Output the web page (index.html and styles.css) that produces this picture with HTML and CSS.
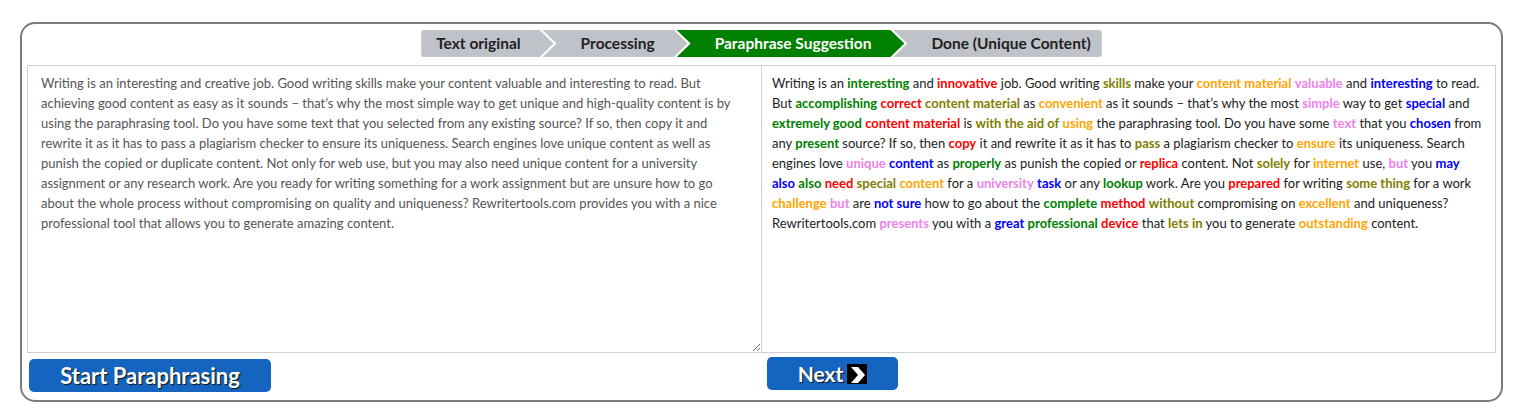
FILE: index.html
```html
<!DOCTYPE html>
<html lang="en">
<head>
    <meta charset="UTF-8">
    <meta name="viewport" content="width=device-width, initial-scale=1.0">
    <title>Paraphrasing Tool</title>

    <link rel="stylesheet" href="styles.css">
</head>
<body>

    <div class="tool-box">

        <div class="steps">
            <div class="step first">Text original</div>
            <div class="step">Processing</div>
            <div class="step active">Paraphrase Suggestion</div>
            <div class="step last">Done (Unique Content)</div>
        </div>

        <div class="panels">
            <div class="col">
                <textarea class="input-text" id="inputText">Writing is an interesting and creative job. Good writing skills make your content valuable and interesting to read. But achieving good content as easy as it sounds – that’s why the most simple way to get unique and high-quality content is by using the paraphrasing tool. Do you have some text that you selected from any existing source? If so, then copy it and rewrite it as it has to pass a plagiarism checker to ensure its uniqueness. Search engines love unique content as well as punish the copied or duplicate content. Not only for web use, but you may also need unique content for a university assignment or any research work. Are you ready for writing something for a work assignment but are unsure how to go about the whole process without compromising on quality and uniqueness? Rewritertools.com provides you with a nice professional tool that allows you to generate amazing content.</textarea>
                <div>
                    <button type="button" class="btn btn-start">Start Paraphrasing</button>
                </div>
            </div>

            <div class="col">
                <div class="output-text">
                    Writing is an <b class="c1">interesting</b> and <b class="c2">innovative</b> job. Good writing <b class="c3">skills</b> make your <b class="c4">content material</b> <b class="c5">valuable</b> and <b class="c6">interesting</b> to read.
                    But <b class="c1">accomplishing</b> <b class="c2">correct</b> <b class="c3">content material</b> as <b class="c4">convenient</b> as it sounds – that’s why the most <b class="c5">simple</b> way to get <b class="c6">special</b> and
                    <b class="c1">extremely good</b> <b class="c2">content material</b> is <b class="c3">with the aid of</b> <b class="c4">using</b> the paraphrasing tool. Do you have some <b class="c5">text</b> that you <b class="c6">chosen</b> from
                    any <b class="c1">present</b> source? If so, then <b class="c2">copy</b> it and rewrite it as it has to <b class="c3">pass</b> a plagiarism checker to <b class="c4">ensure</b> its uniqueness. Search
                    engines love <b class="c5">unique</b> <b class="c6">content</b> as <b class="c1">properly</b> as punish the copied or <b class="c2">replica</b> content. Not <b class="c3">solely</b> for <b class="c4">internet</b> use, <b class="c5">but</b> you <b class="c6">may</b>
                    <b class="c6">also</b> <b class="c1">also</b> <b class="c2">need</b> <b class="c3">special</b> <b class="c4">content</b> for a <b class="c5">university</b> <b class="c6">task</b> or any <b class="c1">lookup</b> work. Are you <b class="c2">prepared</b> for writing <b class="c3">some thing</b> for a work
                    <b class="c4">challenge</b> <b class="c5">but</b> are <b class="c6">not sure</b> how to go about the <b class="c1">complete</b> <b class="c2">method</b> <b class="c3">without</b> compromising on <b class="c4">excellent</b> and uniqueness?
                    Rewritertools.com <b class="c5">presents</b> you with a <b class="c6">great</b> <b class="c1">professional</b> <b class="c2">device</b> that <b class="c3">lets in</b> you to generate <b class="c4">outstanding</b> content.
                </div>
                <div>
                    <button type="button" class="btn btn-next">Next <span class="next-icon"><svg width="20" height="20" viewBox="0 0 20 20"><path d="M4 2 L11 2 L18 10 L11 18 L4 18 L11 10 Z" fill="#fff"/></svg></span></button>
                </div>
            </div>
        </div>

    </div>

</body>
</html>
```

FILE: styles.css
```css
body{
    margin: 0;
    background: white;
    font-family: Lato, "Liberation Sans", sans-serif;
}
.tool-box
{
    width: 1483px;
    height: 380px;
    box-sizing: border-box;
    margin: 22px 0 0 20px;
    border: 2px solid #7b7b7b;
    border-radius: 15px;
    padding: 6px 5px 0 5px;
}
.steps
{
    display: flex;
    justify-content: center;
    height: 27px;
    margin-bottom: 8px;
}
.step
{
    background: #bfc3c9;
    color: #222;
    font-weight: bold;
    font-size: 15.5px;
    line-height: 27px;
    padding: 0 33px 0 38px;
    margin-left: -11px;
    clip-path: polygon(0 0, calc(100% - 14px) 0, 100% 50%, calc(100% - 14px) 100%, 0 100%, 14px 50%);
}
.step.first
{
    margin-left: 0;
    padding-left: 15px;
    border-radius: 3px 0 0 3px;
    clip-path: polygon(0 0, calc(100% - 14px) 0, 100% 50%, calc(100% - 14px) 100%, 0 100%);
}
.step.active
{
    background: #008000;
    color: white;
}
.step.last
{
    padding-right: 11px;
    border-radius: 0 3px 3px 0;
    clip-path: polygon(0 0, 100% 0, 100% 100%, 0 100%, 14px 50%);
}
.panels
{
    display: grid;
    grid-template-columns: 735px 1fr;
}
.input-text
{
    display: block;
    width: 100%;
    height: 288px;
    box-sizing: border-box;
    margin: 0;
    border: 1px solid #cfcfcf;
    padding: 7px 13px;
    font-family: Lato, "Liberation Sans", sans-serif;
    font-size: 13px;
    line-height: 20px;
    color: #555;
}
.output-text
{
    height: 288px;
    box-sizing: border-box;
    border: 1px solid #cfcfcf;
    border-left: none;
    padding: 7px 10px;
    font-size: 13px;
    line-height: 20px;
    color: #1c1c1c;
}
.c1{ color: #008000; }
.c2{ color: #ff0000; }
.c3{ color: #808000; }
.c4{ color: #ffa500; }
.c5{ color: #ee82ee; }
.c6{ color: #0000ff; }
.btn
{
    background: #1565c0;
    color: white;
    border: none;
    border-radius: 5px;
    font-family: Lato, "Liberation Sans", sans-serif;
    font-weight: bold;
    font-size: 22px;
    text-shadow: 1px 1px 1px #111;
    height: 33px;
    cursor: pointer;
}
.btn-start
{
    margin: 6px 0 0 2px;
    width: 242px;
    padding: 0;
}
.btn-next
{
    margin: 4px 0 0 5px;
    width: 131px;
    display: flex;
    align-items: center;
    justify-content: center;
    gap: 4px;
    font-size: 21px;
}
.next-icon
{
    display: inline-block;
    width: 20px;
    height: 20px;
    background: black;
}
```
